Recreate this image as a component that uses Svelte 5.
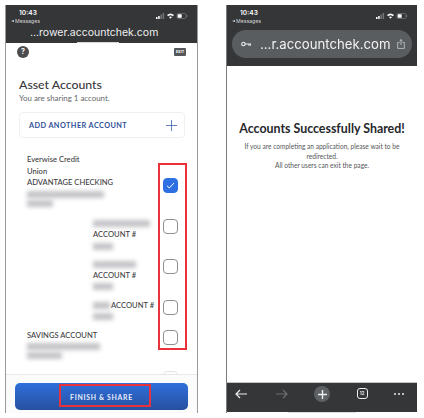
<script lang="ts">
  const accounts = [
    { lines: ['Everwise Credit', 'Union', 'ADVANTAGE CHECKING'], blurs: [77, 26], checked: true, indent: false, height: 64, checkTop: 23.5 },
    { lines: ['ACCOUNT #'], lead: 57, blurs: [20], checked: false, indent: true, height: 40.5, checkTop: 0.5 },
    { lines: ['ACCOUNT #'], lead: 43, blurs: [20], checked: false, indent: true, height: 41, checkTop: 0 },
    { inline: 'ACCOUNT #', lead: 17, blurs: [20], checked: false, indent: true, height: 30, checkTop: 0 },
    { lines: ['SAVINGS ACCOUNT'], blurs: [73, 35], checked: false, indent: false, height: 41, checkTop: 0.5 },
    { lines: [], blurs: [], checked: false, indent: false, height: 8, checkTop: 0.5, faint: true }
  ];
</script>

{#snippet statusBar()}
  <div class="status">
    <div>
      <div class="time">10:43</div>
      <div class="back-app"><span class="tri"></span>Messages</div>
    </div>
    <svg class="status-icons" width="32" height="8" viewBox="0 0 32 8">
      <rect x="0" y="5" width="1.5" height="2" fill="#fff" />
      <rect x="2.2" y="4" width="1.5" height="3" fill="#fff" />
      <rect x="4.4" y="2.5" width="1.5" height="4.5" fill="#777" />
      <rect x="6.6" y="1" width="1.5" height="6" fill="#777" />
      <path d="M11 3 Q14.5 0 18 3 L16.8 4.2 Q14.5 2.4 12.2 4.2 Z M13 5 Q14.5 3.8 16 5 L14.5 6.8 Z" fill="#fff" />
      <rect x="21" y="1.5" width="9" height="5" rx="1.3" fill="none" stroke="#888" stroke-width=".6" />
      <rect x="21.7" y="2.2" width="4" height="3.6" rx=".6" fill="#fff" />
      <rect x="30.4" y="3.2" width=".8" height="1.6" fill="#888" />
    </svg>
  </div>
{/snippet}

<div class="screens">
  <section class="phone left">
    <header class="bar">
      {@render statusBar()}
      <div class="url">...rower.accountchek.com</div>
      <div class="grabber"></div>
    </header>

    <div class="page">
      <div class="tools">
        <span class="help">?</span>
        <span class="exit">EXIT</span>
      </div>

      <h1>Asset Accounts</h1>
      <p class="sub">You are sharing 1 account.</p>

      <div class="add">
        <span>ADD ANOTHER ACCOUNT</span>
        <svg width="11" height="11" viewBox="0 0 11 11"><path d="M5.5 0V11M0 5.5H11" stroke="#3f62a8" stroke-width=".8" fill="none" /></svg>
      </div>

      <div class="list">
        {#each accounts as acc}
          <div class="acct" style="height: {acc.height}px">
            <div class="acct-text" class:indent={acc.indent}>
              {#if acc.lead && !acc.inline}
                <div class="smear" style="width: {acc.lead}px"></div>
              {/if}
              {#if acc.inline}
                <div class="inline-row">
                  <span class="smear" style="width: {acc.lead}px"></span>
                  <span>{acc.inline}</span>
                </div>
              {/if}
              {#each acc.lines ?? [] as line}
                <div class="line">{line}</div>
              {/each}
              {#each acc.blurs as w}
                <div class="smear" style="width: {w}px"></div>
              {/each}
            </div>
            <span class="check" class:on={acc.checked} class:faint={acc.faint} style="margin-top: {acc.checkTop}px">
              {#if acc.checked}
                <svg width="9" height="7" viewBox="0 0 9 7"><path d="M1 3.8 3.3 6 8 1" stroke="#fff" stroke-width="1" fill="none" /></svg>
              {/if}
            </span>
          </div>
        {/each}
        <div class="red-box checks-box"></div>
      </div>

      <div class="footer">
        <button class="finish">
          FINISH &amp; SHARE
          <span class="red-box finish-box"></span>
        </button>
      </div>
    </div>
  </section>

  <section class="phone right">
    <header class="bar tall">
      {@render statusBar()}
      <div class="pill">
        <svg width="10" height="6" viewBox="0 0 10 6">
          <circle cx="2.4" cy="3" r="1.7" fill="none" stroke="#eee" stroke-width="1.1" />
          <path d="M4 3H10M8 3V5M9.6 3V4.6" stroke="#eee" stroke-width="1" fill="none" />
        </svg>
        <span class="pill-url">...r.accountchek.com</span>
        <svg width="8" height="10" viewBox="0 0 8 10">
          <path d="M2.4 3.5H.7V9.4H7.3V3.5H5.6M4 6.2V.6M2.6 1.9 4 .6 5.4 1.9" stroke="#ddd" stroke-width=".7" fill="none" />
        </svg>
      </div>
    </header>

    <div class="done">
      <h2>Accounts Successfully Shared!</h2>
      <p>If you are completing an application, please wait to be redirected.<br />All other users can exit the page.</p>
    </div>

    <footer class="toolbar">
      <svg width="13" height="10" viewBox="0 0 13 10"><path d="M12 5H1M5 1 1 5 5 9" stroke="#eee" stroke-width="1.2" fill="none" /></svg>
      <svg width="13" height="10" viewBox="0 0 13 10"><path d="M1 5H12M8 1 12 5 8 9" stroke="#6c7073" stroke-width="1.2" fill="none" /></svg>
      <span class="plus">
        <svg width="9" height="9" viewBox="0 0 9 9"><path d="M4.5 0V9M0 4.5H9" stroke="#eee" stroke-width="1.4" fill="none" /></svg>
      </span>
      <span class="tabs">12</span>
      <span class="dots"><i></i><i></i><i></i></span>
    </footer>
    <div class="indicator"></div>
  </section>
</div>

<style>
  :global(body) { background: #fff; }

  .screens {
    display: grid;
    grid-template-columns: 193px 191px;
    column-gap: 28px;
    width: 424px;
    height: 418px;
    padding: 5px 0 5px 5px;
    box-sizing: border-box;
    overflow: hidden;
    font-family: Lato, "Noto Sans", sans-serif;
    filter: blur(0.4px);
  }

  .phone {
    display: flex;
    flex-direction: column;
    position: relative;
    min-height: 0;
  }

  .left {
    border-left: 1px solid #9a9a9a;
    border-right: 1px solid #9a9a9a;
  }

  .right { border-left: 1px solid #7c7c7c; }

  .bar {
    height: 38px;
    background: #343638;
    color: #fff;
    position: relative;
    flex: none;
  }

  .bar.tall { height: 61px; }

  .status {
    display: flex;
    justify-content: space-between;
    align-items: flex-start;
    padding: 4px 9px 0 5px;
    height: 20px;
    box-sizing: border-box;
  }

  .time {
    font: 600 6.6px/9px Inter, sans-serif;
    padding-left: 8px;
  }

  .back-app {
    font: 400 5.2px/6px Inter, sans-serif;
    color: #d5d5d5;
    display: flex;
    align-items: center;
    gap: 1px;
  }

  .tri {
    border-right: 3px solid #d5d5d5;
    border-top: 1.5px solid transparent;
    border-bottom: 1.5px solid transparent;
  }

  .status-icons { margin-top: 3px; }

  .url {
    font: 400 10.5px/14px Inter, sans-serif;
    padding-left: 24px;
    margin-top: 1px;
    color: #f0f0f0;
    white-space: nowrap;
  }

  .grabber {
    position: absolute;
    left: 71px;
    bottom: 0;
    width: 42px;
    height: 1px;
    background: #d8d8d8;
  }

  .page {
    flex: 1;
    min-height: 0;
    display: flex;
    flex-direction: column;
    background: #fff;
    color: #333;
  }

  .tools {
    display: flex;
    justify-content: space-between;
    align-items: center;
    padding: 3px 11px 0 11px;
  }

  .help {
    width: 12px;
    height: 12px;
    border-radius: 50%;
    background: #4c4c4e;
    color: #fff;
    font: 700 7px/12px Inter, sans-serif;
    text-align: center;
  }

  .exit {
    width: 12px;
    height: 8px;
    background: #55575a;
    color: #fff;
    border-radius: 1px;
    font: 700 3.6px/8px Inter, sans-serif;
    text-align: center;
  }

  h1 {
    margin: 19px 0 0 13px;
    font-size: 12.3px;
    line-height: 15px;
    font-weight: 500;
    color: #3a3a3c;
  }

  .sub {
    margin: 2px 0 0 13px;
    font-size: 7.9px;
    line-height: 9px;
    color: #66686b;
  }

  .add {
    margin: 9px 12px 0 13px;
    height: 26px;
    box-sizing: border-box;
    border: 1px solid #f0f0f2;
    border-radius: 4px;
    display: flex;
    align-items: center;
    justify-content: space-between;
    padding: 0 7px 0 9px;
    color: #2f5198;
    font-size: 7.3px;
    font-weight: 700;
    letter-spacing: 0.42px;
  }

  .list {
    position: relative;
    margin-top: 16px;
    padding: 0 19px 0 21px;
    flex: 1;
    min-height: 0;
    overflow: hidden;
  }

  .acct {
    display: flex;
    justify-content: space-between;
    align-items: flex-start;
  }

  .acct-text {
    font-size: 7.6px;
    line-height: 11px;
    font-weight: 500;
    color: #3c3c3e;
    min-width: 0;
    white-space: nowrap;
  }

  .indent { padding-left: 66px; }

  .line { height: 11.5px; }

  .inline-row {
    display: flex;
    align-items: center;
    gap: 1px;
    height: 11px;
  }

  .smear {
    display: block;
    height: 7px;
    margin: 2px 0;
    background: #c4c4c8;
    filter: blur(2px);
  }

  .inline-row .smear { margin: 0; }

  .check {
    flex: none;
    width: 15px;
    height: 15px;
    box-sizing: border-box;
    border: 1px solid #8f8f8f;
    border-radius: 4px;
    background: #fff;
    display: flex;
    align-items: center;
    justify-content: center;
  }

  .check.on {
    background: #2f6fe4;
    border-color: #2f6fe4;
  }

  .check.faint { border-color: #e4e4e4; }

  .red-box {
    position: absolute;
    box-sizing: border-box;
    border: 2px solid #e8323c;
    pointer-events: none;
  }

  .checks-box {
    left: 152px;
    top: 9px;
    width: 29px;
    height: 187px;
  }

  .footer {
    flex: none;
    height: 39px;
    border-top: 1px solid #e8e8e8;
    padding: 8px 9px 0;
    box-sizing: border-box;
    background: #fbfbfb;
  }

  .finish {
    position: relative;
    display: block;
    width: 100%;
    height: 27px;
    border: none;
    border-radius: 5px;
    background: linear-gradient(#2f6fdc, #26509f);
    color: #e8eefb;
    font-family: Lato, sans-serif;
    font-size: 6.9px;
    font-weight: 700;
    letter-spacing: 0.7px;
    padding: 0;
  }

  .finish-box {
    left: 44px;
    top: 1px;
    width: 92px;
    height: 23px;
  }

  .pill {
    display: flex;
    align-items: center;
    margin: 5px 5px 0 5px;
    height: 28px;
    border-radius: 14px;
    background: #5a5d60;
    padding: 0 7px 0 9px;
    box-sizing: border-box;
  }

  .pill-url {
    flex: 1;
    padding-left: 9px;
    font: 400 13.2px/14px Inter, sans-serif;
    color: #f2f2f2;
    white-space: nowrap;
  }

  .done {
    flex: 1;
    min-height: 0;
    padding-top: 55px;
    text-align: center;
    color: #55575a;
    background: #fff;
  }

  h2 {
    margin: 0;
    font-size: 12.4px;
    line-height: 16px;
    font-weight: 700;
    color: #26282b;
    white-space: nowrap;
  }

  .done p {
    margin: 5px 10px 0;
    font-size: 6.6px;
    line-height: 9.5px;
  }

  .toolbar {
    flex: none;
    height: 30px;
    background: #343638;
    border-top: 1px solid #c4c4c4;
    box-sizing: border-box;
    display: flex;
    justify-content: space-between;
    align-items: flex-start;
    padding: 3px 13px 0 8px;
    margin-bottom: 1px;
  }

  .toolbar svg { margin-top: 3px; }

  .plus {
    width: 16px;
    height: 16px;
    border-radius: 50%;
    background: #5d6165;
    display: flex;
    align-items: center;
    justify-content: center;
  }

  .plus svg { margin-top: 0; }

  .tabs {
    width: 11px;
    height: 11px;
    margin-top: 2px;
    box-sizing: border-box;
    border: 1px solid #eee;
    border-radius: 3px;
    color: #eee;
    font: 700 4.5px/9px Inter, sans-serif;
    text-align: center;
  }

  .dots {
    display: flex;
    gap: 1.6px;
    margin-top: 7px;
  }

  .dots i {
    width: 2.2px;
    height: 2.2px;
    border-radius: 50%;
    background: #eee;
  }

  .indicator {
    position: absolute;
    left: 61px;
    bottom: 0;
    width: 68px;
    height: 1.5px;
    background: #ddd;
  }
</style>
